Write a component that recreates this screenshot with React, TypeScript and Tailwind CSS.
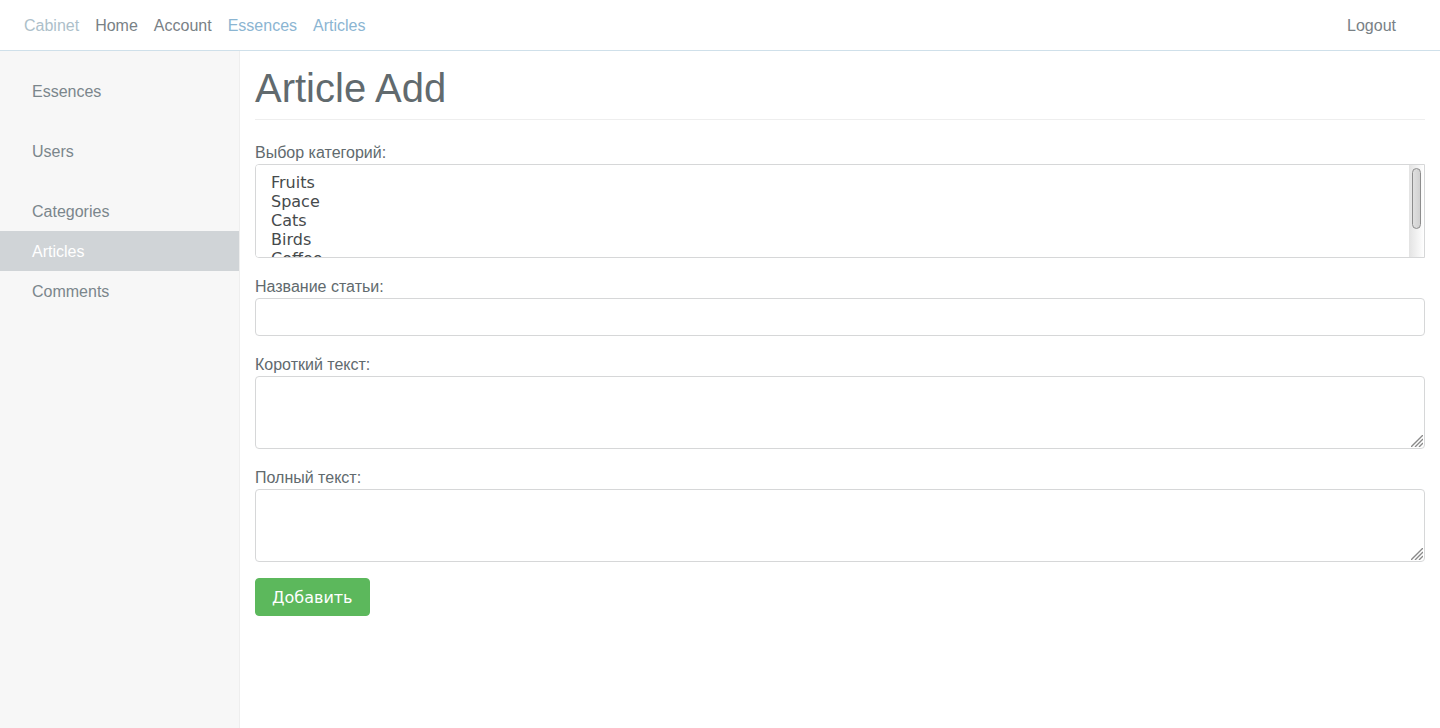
import type { ReactNode } from "react";

const topLinks = [
  { label: "Cabinet", color: "text-[#adbfca]" },
  { label: "Home", color: "text-[#798186]" },
  { label: "Account", color: "text-[#798186]" },
  { label: "Essences", color: "text-[#8bb5d2]" },
  { label: "Articles", color: "text-[#8bb5d2]" },
];

const sideGroups = [["Essences"], ["Users"], ["Categories", "Articles", "Comments"]];
const categories = ["Fruits", "Space", "Cats", "Birds", "Coffee", "Travel", "Music"];
const control = "block w-full rounded border border-[#d6d7d8] bg-white px-3 py-2 text-[#464a4c] outline-none";

function Field({ id, label, children }: { id: string; label: string; children: ReactNode }) {
  return (
    <div className="mb-4">
      <label htmlFor={id} className="block pt-0.5 leading-[22px]">{label}</label>
      {children}
    </div>
  );
}

function TextArea({ id }: { id: string }) {
  return (
    <div className="relative">
      <textarea id={id} className={`${control} h-[73px] resize-none`} />
      <svg
        className="pointer-events-none absolute right-0.5 bottom-0.5 h-3 w-3"
        viewBox="0 0 12 12"
        stroke="#8a8a8a"
        strokeWidth="1.4"
        aria-hidden="true"
      >
        <path d="M0 12L12 0M4 12L12 4M8 12L12 8" />
      </svg>
    </div>
  );
}

export default function App() {
  return (
    <div className="flex min-h-screen flex-col bg-white font-['Liberation_Sans',Arial,sans-serif] text-base leading-6 text-[#616a6e]">
      <nav className="flex items-center border-b border-[#cfe0ea] pt-[14px] pr-11 pb-3 pl-6">
        <div className="flex grow gap-4">
          {topLinks.map((link) => (
            <a key={link.label} href="#" className={link.color}>{link.label}</a>
          ))}
        </div>
        <a href="#" className="text-[#798186]">Logout</a>
      </nav>
      <div className="flex grow">
        <aside className="flex w-60 shrink-0 flex-col gap-5 border-r border-[#eeeeee] bg-[#f7f7f7] pt-5">
          {sideGroups.map((group) => (
            <ul key={group[0]}>
              {group.map((item) => (
                <li key={item}>
                  <a
                    href="#"
                    className={`block px-8 pt-[9px] pb-[7px] ${item === "Articles" ? "bg-[#d0d4d7] text-white" : "text-[#7b868c]"}`}
                  >
                    {item}
                  </a>
                </li>
              ))}
            </ul>
          ))}
        </aside>
        <main className="min-w-0 grow px-[15px] pt-[15px]">
          <h1 className="mb-5 border-b border-[#eeeeee] pb-[9px] text-[40px] leading-[44px]">Article Add</h1>
          <form onSubmit={(event) => event.preventDefault()}>
            <Field id="categories" label="Выбор категорий:">
              <div className="relative">
                <select
                  id="categories"
                  multiple
                  className={`${control} h-[94px] rounded-r-none font-['DejaVu_Sans',sans-serif] leading-[19px] [scrollbar-width:none]`}
                >
                  {categories.map((name) => (
                    <option key={name} className="min-h-0 px-[3px] py-0 leading-[19px]">{name}</option>
                  ))}
                </select>
                <div
                  aria-hidden="true"
                  className="pointer-events-none absolute inset-y-px right-px w-[15px] bg-linear-to-r from-[#e3e3e3] to-white pt-[3px] pl-[3px]"
                >
                  <div className="h-[61px] w-[9px] rounded-full border border-[#8c8c8c] bg-linear-to-r from-[#e0e0e0] to-[#d0d0d0]" />
                </div>
              </div>
            </Field>
            <Field id="title" label="Название статьи:">
              <input id="title" type="text" className={`${control} h-[38px]`} />
            </Field>
            <Field id="short-text" label="Короткий текст:">
              <TextArea id="short-text" />
            </Field>
            <Field id="full-text" label="Полный текст:">
              <TextArea id="full-text" />
            </Field>
            <button
              type="submit"
              className="rounded border border-[#5cb85c] bg-[#5cb85c] px-4 pt-[7px] pb-[5px] font-['DejaVu_Sans',sans-serif] text-white"
            >
              Добавить
            </button>
          </form>
        </main>
      </div>
    </div>
  );
}
